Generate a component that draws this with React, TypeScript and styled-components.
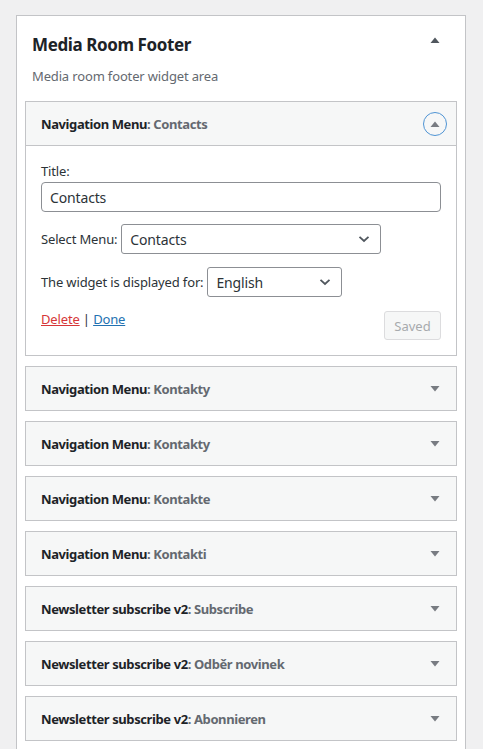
import React from 'react'
import styled, { createGlobalStyle } from 'styled-components'

const GlobalStyle = createGlobalStyle`
  html, body {
    margin: 0;
    padding: 0;
    background: #f0f0f1;
    font-family: 'Noto Sans', 'Open Sans', sans-serif;
    color: #1d2327;
    font-size: 13px;
    letter-spacing: -0.15px;
  }
`

const Page = styled.div`
  padding: 15px 0 0 16px;
  height: 749px;
  overflow: hidden;
  box-sizing: border-box;
`

const Sidebar = styled.div`
  width: 450px;
  box-sizing: border-box;
  background: #fff;
  border: 1px solid #c3c4c7;
  border-bottom: none;
  min-height: 760px;
`

const SidebarHead = styled.div`
  display: flex;
  align-items: center;
  justify-content: space-between;
  padding: 14px 25px 0 15px;
  height: 28px;
`

const SidebarTitle = styled.h2`
  margin: 0;
  font-size: 17px;
  font-weight: 700;
  letter-spacing: -0.4px;
  color: #1d2327;
`

const HeadArrow = styled.span`
  display: flex;
  margin-bottom: 8px;
`

const Description = styled.p`
  margin: 8px 0 15px 15px;
  color: #646970;
  font-size: 13px;
  line-height: 20px;
`

const WidgetList = styled.div`
  padding: 0 8px;
  display: flex;
  flex-direction: column;
  gap: 10px;
`

const Widget = styled.div`
  border: 1px solid #c3c4c7;
  background: #f6f7f7;
`

const WidgetTop = styled.div<{ $open?: boolean }>`
  height: 43px;
  display: flex;
  align-items: center;
  justify-content: space-between;
  padding: 0 9px 0 15px;
  border-bottom: ${p => (p.$open ? '1px solid #c3c4c7' : 'none')};
`

const WidgetTitle = styled.h3`
  margin: 0;
  font-size: 13px;
  font-weight: 700;
  letter-spacing: -0.4px;
  color: #1d2327;
`

const InTitle = styled.span`
  color: #646970;
`

const ToggleButton = styled.span<{ $focused?: boolean }>`
  width: 24px;
  height: 24px;
  border-radius: 50%;
  display: flex;
  align-items: center;
  justify-content: center;
  box-sizing: border-box;
  border: ${p => (p.$focused ? '1.5px solid #4f94d4' : 'none')};
`

const WidgetInside = styled.div`
  background: #fff;
  padding: 15px 15px 15px;
`

const Label = styled.label`
  display: block;
  line-height: 20px;
  color: #2c3338;
`

const TextInput = styled.div`
  margin-top: 1px;
  height: 30px;
  box-sizing: border-box;
  border: 1px solid #8c8f94;
  border-radius: 4px;
  padding: 0 8px;
  display: flex;
  align-items: center;
  font-size: 14px;
  color: #2c3338;
`

const FieldRow = styled.div<{ $gap: number }>`
  display: flex;
  align-items: center;
  gap: 4px;
  margin-top: ${p => p.$gap}px;
  color: #2c3338;
`

const Select = styled.div<{ $width: number }>`
  width: ${p => p.$width}px;
  height: 30px;
  box-sizing: border-box;
  border: 1px solid #8c8f94;
  border-radius: 3px;
  padding: 0 10px 0 8px;
  display: flex;
  align-items: center;
  justify-content: space-between;
  font-size: 14px;
  color: #2c3338;
`

const Actions = styled.div`
  margin-top: 14px;
  display: flex;
  justify-content: space-between;
  align-items: flex-start;
`

const LinkGroup = styled.div`
  line-height: 16px;
  color: #2c3338;
`

const ActionLink = styled.a<{ $danger?: boolean }>`
  color: ${p => (p.$danger ? '#d63638' : '#2271b1')};
  text-decoration: underline;
`

const SavedButton = styled.button`
  height: 29px;
  width: 57px;
  box-sizing: border-box;
  background: #f6f7f7;
  border: 1px solid #dcdcde;
  border-radius: 3px;
  color: #a7aaad;
  font-family: inherit;
  font-size: 13px;
  padding: 0;
`

const Chevron = () => (
  <svg width="12" height="8" viewBox="0 0 12 8">
    <path d="M1.5 1.8 L6 6 L10.5 1.8" fill="none" stroke="#50575e" strokeWidth="1.8" />
  </svg>
)

const Arrow = ({ up, color }: { up?: boolean; color: string }) => (
  <svg width="10" height="6" viewBox="0 0 10 6">
    <path d={up ? 'M0.5 6 L5 0.5 L9.5 6 Z' : 'M0.5 0 L5 5.5 L9.5 0 Z'} fill={color} />
  </svg>
)

const collapsed: [string, string][] = [
  ['Navigation Menu', 'Kontakty'],
  ['Navigation Menu', 'Kontakty'],
  ['Navigation Menu', 'Kontakte'],
  ['Navigation Menu', 'Kontakti'],
  ['Newsletter subscribe v2', 'Subscribe'],
  ['Newsletter subscribe v2', 'Odběr novinek'],
  ['Newsletter subscribe v2', 'Abonnieren'],
]

export default function App() {
  return (
    <>
      <GlobalStyle />
      <Page>
        <Sidebar>
          <SidebarHead>
            <SidebarTitle>Media Room Footer</SidebarTitle>
            <HeadArrow>
              <Arrow up color="#50575e" />
            </HeadArrow>
          </SidebarHead>
          <Description>Media room footer widget area</Description>
          <WidgetList>
            <Widget>
              <WidgetTop $open>
                <WidgetTitle>
                  Navigation Menu<InTitle>: Contacts</InTitle>
                </WidgetTitle>
                <ToggleButton $focused>
                  <Arrow up color="#787c82" />
                </ToggleButton>
              </WidgetTop>
              <WidgetInside>
                <Label>Title:</Label>
                <TextInput>Contacts</TextInput>
                <FieldRow $gap={12}>
                  Select Menu:
                  <Select $width={260}>
                    Contacts
                    <Chevron />
                  </Select>
                </FieldRow>
                <FieldRow $gap={13}>
                  The widget is displayed for:
                  <Select $width={135}>
                    English
                    <Chevron />
                  </Select>
                </FieldRow>
                <Actions>
                  <LinkGroup>
                    <ActionLink $danger href="#">Delete</ActionLink> |{' '}
                    <ActionLink href="#">Done</ActionLink>
                  </LinkGroup>
                  <SavedButton disabled>Saved</SavedButton>
                </Actions>
              </WidgetInside>
            </Widget>
            {collapsed.map(([name, title], i) => (
              <Widget key={i}>
                <WidgetTop>
                  <WidgetTitle>
                    {name}
                    <InTitle>: {title}</InTitle>
                  </WidgetTitle>
                  <ToggleButton>
                    <Arrow color="#787c82" />
                  </ToggleButton>
                </WidgetTop>
              </Widget>
            ))}
          </WidgetList>
        </Sidebar>
      </Page>
    </>
  )
}
